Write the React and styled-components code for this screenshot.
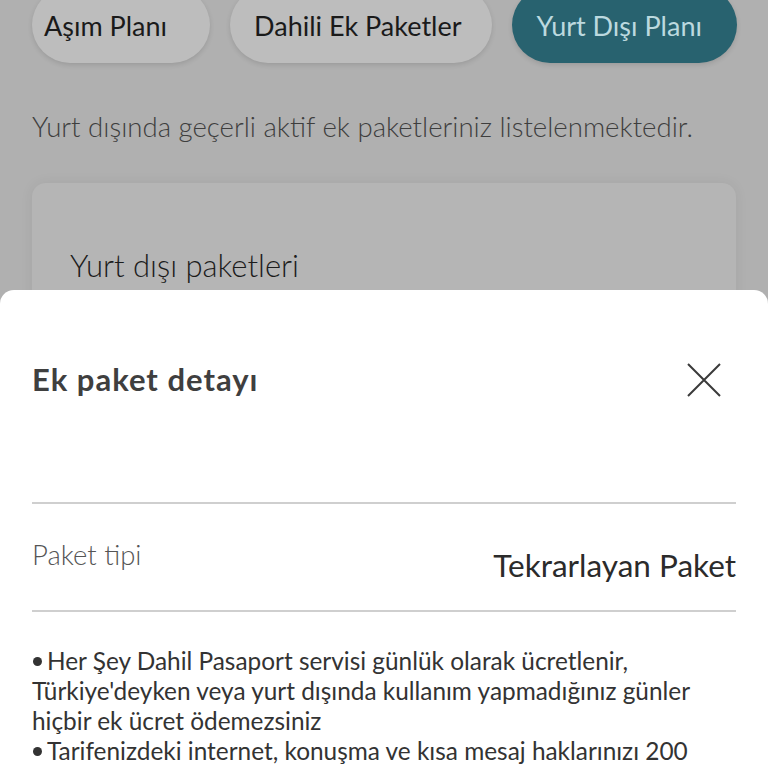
import React from "react"
import styled, { createGlobalStyle } from "styled-components"

const GlobalStyle = createGlobalStyle`
  html, body {
    margin: 0;
    padding: 0;
    background: #b0b0b0;
    font-family: Lato, "Noto Sans", sans-serif;
    overflow: hidden;
  }
`

const Screen = styled.div`
  position: relative;
  width: 768px;
  height: 768px;
  overflow: hidden;
  background: #b0b0b0;
`

const Page = styled.div`
  padding: 0 32px;
  margin-top: -13px;
`

const Tabs = styled.div`
  display: flex;
  gap: 20px;
`

const Pill = styled.div`
  height: 76px;
  padding: 0 ${p => p.$right}px 0 ${p => p.$left}px;
  display: flex;
  align-items: center;
  border-radius: 38px;
  font-size: 27px;
  background: ${p => (p.$active ? "#28626f" : "#bdbdbd")};
  color: ${p => (p.$active ? "#bcd9df" : "#1a1a1a")};
  box-shadow: 0 2px 5px rgba(0, 0, 0, 0.12);
  white-space: nowrap;
`

const Intro = styled.p`
  margin: 47px 0 0;
  font-size: 27.6px;
  font-weight: 300;
  color: #3e3e3e;
`

const Card = styled.div`
  margin-top: 40px;
  height: 200px;
  border-radius: 14px;
  background: #b5b5b5;
  box-shadow: 0 0 14px rgba(0, 0, 0, 0.06);
  padding: 63px 38px 0;
  box-sizing: border-box;
`

const CardTitle = styled.div`
  font-size: 31px;
  font-weight: 300;
  color: #1c1c1c;
`

const Sheet = styled.div`
  position: absolute;
  left: 0;
  right: 0;
  top: 290px;
  bottom: 0;
  background: #fff;
  border-radius: 14px 14px 0 0;
  padding: 0 32px;
`

const SheetHeader = styled.div`
  height: 214px;
  display: flex;
  align-items: flex-start;
  justify-content: space-between;
  padding-top: 70px;
  box-sizing: border-box;
  border-bottom: 2px solid #cfcfcf;
`

const SheetTitle = styled.h2`
  margin: 0;
  font-size: 31px;
  font-weight: 700;
  letter-spacing: 1px;
  color: #3f3f3f;
`

const CloseButton = styled.button`
  border: 0;
  background: none;
  padding: 0;
  margin: 2px 14px 0 0;
  width: 36px;
  height: 36px;
  cursor: pointer;
`

const InfoRow = styled.div`
  height: 108px;
  display: flex;
  justify-content: space-between;
  align-items: flex-start;
  border-bottom: 2px solid #cfcfcf;
  box-sizing: border-box;
`

const InfoLabel = styled.span`
  margin-top: 34px;
  font-size: 27.5px;
  font-weight: 300;
  color: #555;
`

const InfoValue = styled.span`
  margin-top: 42px;
  font-size: 31.5px;
  font-weight: 400;
  color: #2b2b2b;
`

const Notes = styled.div`
  padding-top: 34px;
  font-size: 24.4px;
  line-height: 30px;
  color: #333;
`

const Note = styled.div`
  &::before {
    content: "";
    display: inline-block;
    width: 9px;
    height: 9px;
    border-radius: 50%;
    background: #333;
    margin: 0 5px 4px 1px;
  }
`

const CloseIcon = () => (
  <svg width="36" height="36" viewBox="0 0 36 36">
    <path d="M2 2 L34 34 M34 2 L2 34" stroke="#3a3a3a" strokeWidth="2" fill="none" />
  </svg>
)

export default function App() {
  return (
    <Screen>
      <GlobalStyle />
      <Page>
        <Tabs>
          <Pill $left={12} $right={43}>Aşım Planı</Pill>
          <Pill $left={24} $right={30}>Dahili Ek Paketler</Pill>
          <Pill $left={25} $right={35} $active>Yurt Dışı Planı</Pill>
        </Tabs>
        <Intro>Yurt dışında geçerli aktif ek paketleriniz listelenmektedir.</Intro>
        <Card>
          <CardTitle>Yurt dışı paketleri</CardTitle>
        </Card>
      </Page>
      <Sheet>
        <SheetHeader>
          <SheetTitle>Ek paket detayı</SheetTitle>
          <CloseButton aria-label="Kapat">
            <CloseIcon />
          </CloseButton>
        </SheetHeader>
        <InfoRow>
          <InfoLabel>Paket tipi</InfoLabel>
          <InfoValue>Tekrarlayan Paket</InfoValue>
        </InfoRow>
        <Notes>
          <Note>
            Her Şey Dahil Pasaport servisi günlük olarak ücretlenir,
            <br />
            Türkiye'deyken veya yurt dışında kullanım yapmadığınız günler
            <br />
            hiçbir ek ücret ödemezsiniz
          </Note>
          <Note>Tarifenizdeki internet, konuşma ve kısa mesaj haklarınızı 200</Note>
        </Notes>
      </Sheet>
    </Screen>
  )
}
